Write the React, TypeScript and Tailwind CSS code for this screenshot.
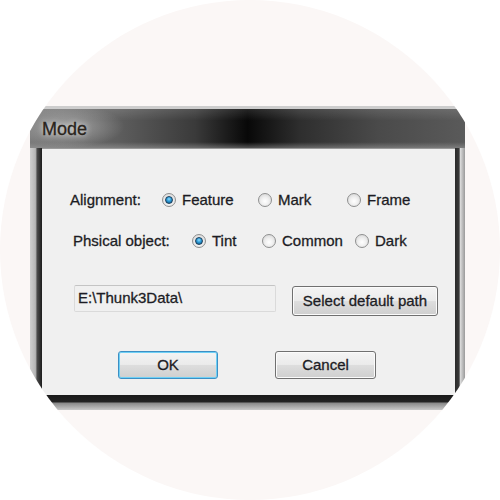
import React from 'react';

const font = "font-['Liberation_Sans',Arial,sans-serif]";

const Radio = ({ checked, label, width }: { checked?: boolean; label: string; width?: string }) => (
  <div className={`flex items-center ${width ?? ''}`}>
    <span className="w-[14px] h-[14px] rounded-full border border-[#8e8f8f] bg-[radial-gradient(circle_at_50%_60%,#ffffff_0%,#f0f0f0_40%,#cfcfcf_100%)] flex items-center justify-center shrink-0">
      {checked && (
        <span className="w-[8px] h-[8px] rounded-full border border-[#1d3f5a] bg-[radial-gradient(circle_at_50%_35%,#8fdcff_0%,#2a9ad6_45%,#114f7c_100%)]" />
      )}
    </span>
    <span className="ml-[6px] text-[15px] leading-[20px] text-[#1c1c24]">{label}</span>
  </div>
);

const Button = ({ children, focused, className }: { children: React.ReactNode; focused?: boolean; className?: string }) => (
  <div
    className={`flex items-center justify-center rounded-[3px] border text-[15px] text-[#1c1c24] bg-[linear-gradient(to_bottom,#f4f4f4_0%,#ebebeb_48%,#dddddd_52%,#cfcfcf_100%)] ${
      focused
        ? 'border-[#3c8fc4] shadow-[inset_0_0_0_1px_#6fd0f5]'
        : 'border-[#707070] shadow-[inset_0_0_0_1px_#fbfbfb]'
    } ${className ?? ''}`}
  >
    {children}
  </div>
);

export default function App() {
  return (
    <div className={`min-h-screen bg-white ${font} [-webkit-text-stroke:0.3px_#1c1c24]`}>
      <div className="w-[500px] h-[500px] rounded-full overflow-hidden bg-[#fbf7f6] pt-[106px] pl-[30px]">
        {/* dialog window */}
        <div className="w-[435px] flex flex-col">
          {/* title bar */}
          <div className="h-[42px] border-t-[3px] border-[#cdcdcd] bg-[linear-gradient(to_right,#7a7a7a_0%,#5e5e5e_20%,#3a3a3a_38%,#080808_50%,#2e2e2e_62%,#4a4a4a_80%,#5a5a5a_100%)] relative">
            <div className="absolute inset-0 bg-[linear-gradient(to_bottom,rgba(255,255,255,0.12)_0%,rgba(255,255,255,0)_30%,rgba(0,0,0,0)_85%,rgba(160,160,160,0.5)_100%)]" />
            <div className="absolute left-0 top-0 w-[95px] h-full bg-[radial-gradient(ellipse_at_40%_45%,rgba(200,200,200,0.6)_0%,rgba(200,200,200,0)_70%)]" />
            <div className="relative pl-[12px] pt-[7px] text-[18px] text-[#2a241c] [-webkit-text-stroke:0.3px_#2a241c] [text-shadow:0_0_6px_rgba(255,255,255,0.9)]">
              Mode
            </div>
          </div>
          <div className="flex">
            {/* left frame */}
            <div className="w-[12px] bg-[linear-gradient(to_right,#cfcfcf_0%,#b5b5b5_45%,#4a4a4a_60%,#1c1c1c_100%)]" />
            {/* content panel */}
            <div className="w-[413px] h-[247px] bg-[#f0f0f0] border-t border-[#9a9a9a] flex flex-col">
              <div className="flex items-center mt-[41px] ml-[28px]">
                <span className="w-[92px] text-[15px] leading-[20px] text-[#1c1c24]">Alignment:</span>
                <Radio checked label="Feature" width="w-[96px]" />
                <Radio label="Mark" width="w-[89px]" />
                <Radio label="Frame" />
              </div>
              <div className="flex items-center mt-[21px] ml-[31px]">
                <span className="w-[119px] text-[15px] leading-[20px] text-[#1c1c24]">Phsical object:</span>
                <Radio checked label="Tint" width="w-[70px]" />
                <Radio label="Common" width="w-[93px]" />
                <Radio label="Dark" />
              </div>
              <div className="flex items-start mt-[34px] ml-[32px]">
                <div className="w-[202px] h-[27px] rounded-[2px] border border-[#dadada] border-t-[#c4c4c4] bg-[#f0f0f0] pl-[3px] text-[15px] leading-[24px] text-[#1c1c24]">
                  E:\Thunk3Data\
                </div>
                <Button className="ml-[16px] mt-[1px] w-[146px] h-[30px]">Select default path</Button>
              </div>
              <div className="flex mt-[35px] ml-[76px]">
                <Button focused className="w-[100px] h-[28px]">OK</Button>
                <Button className="ml-[57px] w-[101px] h-[28px]">Cancel</Button>
              </div>
            </div>
            {/* right frame */}
            <div className="w-[10px] bg-[linear-gradient(to_right,#2a2a2a_0%,#3a3a3a_40%,#d8d8d8_55%,#9a9a9a_100%)]" />
          </div>
          {/* bottom frame */}
          <div className="h-[15px] bg-[linear-gradient(to_bottom,#1a1a1a_0%,#222222_45%,#8a8a8a_55%,#c8c8c8_100%)]" />
        </div>
      </div>
    </div>
  );
}
